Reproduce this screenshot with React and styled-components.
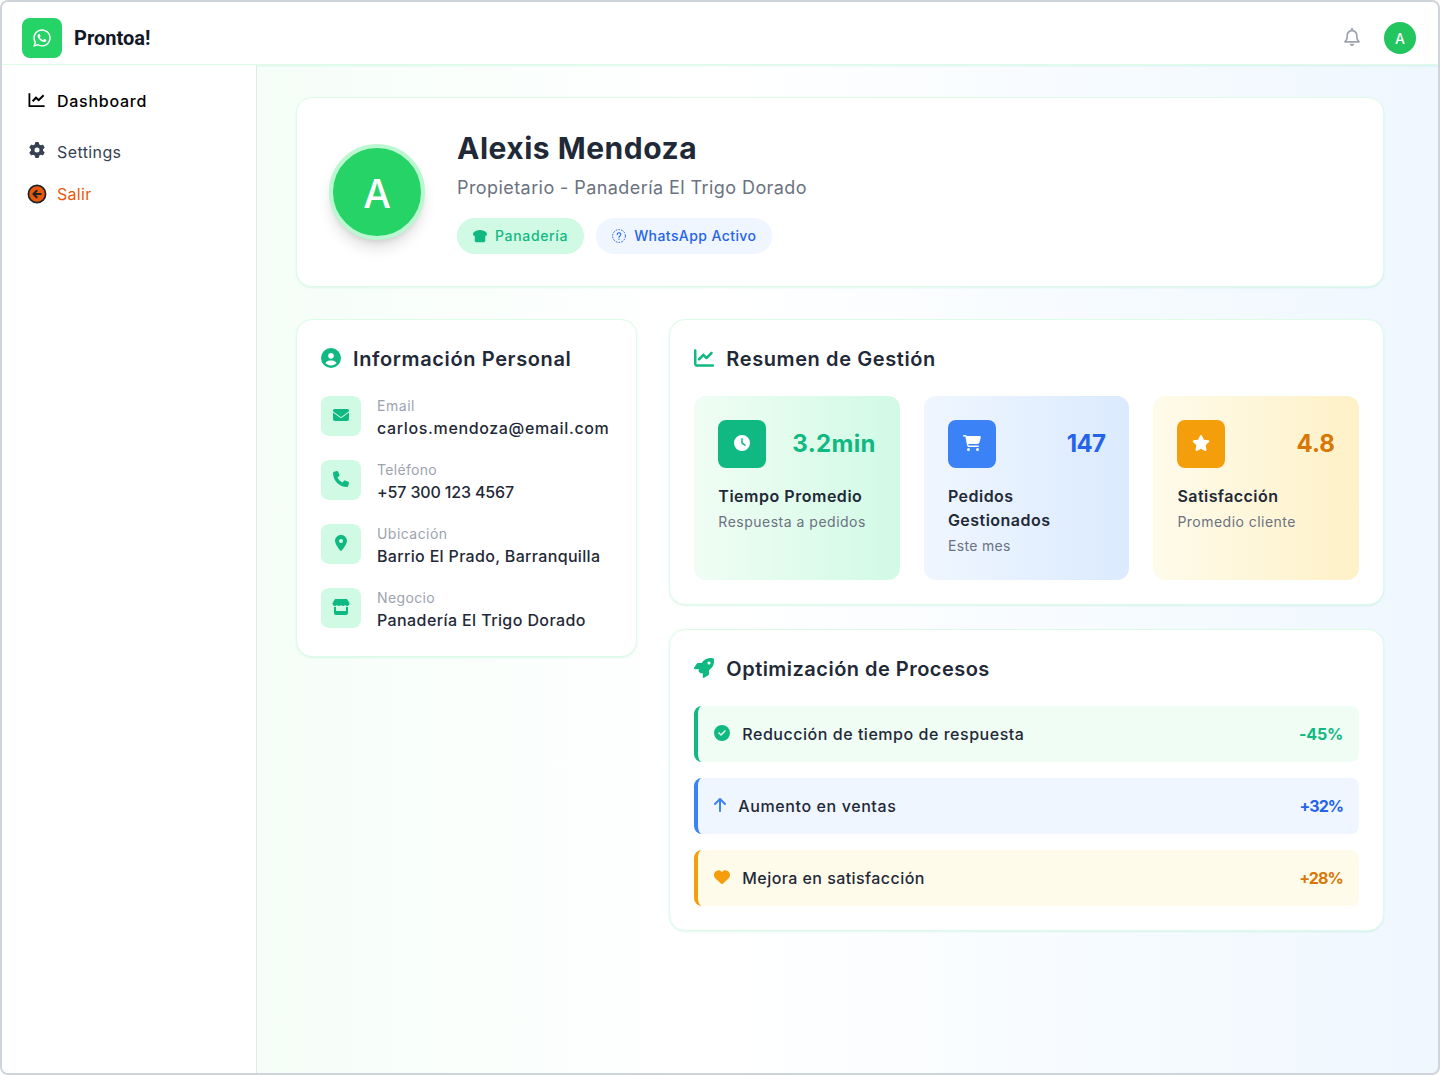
import React from "react";
import styled, { createGlobalStyle } from "styled-components";
import {
  FaArrowUp,
  FaBreadSlice,
  FaCartShopping,
  FaChartLine,
  FaCircleCheck,
  FaCircleUser,
  FaClock,
  FaEnvelope,
  FaGear,
  FaHeart,
  FaLocationDot,
  FaPhone,
  FaRegBell,
  FaRocket,
  FaStar,
  FaStore,
  FaWhatsapp,
} from "react-icons/fa6";

const GlobalStyle = createGlobalStyle`
  *, *::before, *::after { box-sizing: border-box; }
  body {
    margin: 0;
    font-family: Inter, "Open Sans", sans-serif;
    color: #1f2937;
    background: #fff;
  }
  h1, h2, h3, p { margin: 0; }
`;

const tones = {
  green: { soft: "#f0fdf4", deep: "#d1fae5", solid: "#10b981", text: "#10b981" },
  blue: { soft: "#eff6ff", deep: "#dbeafe", solid: "#3b82f6", text: "#2563eb" },
  amber: { soft: "#fffbeb", deep: "#fef1c7", solid: "#f59e0b", text: "#d97706" },
};

const Shell = styled.div`
  display: flex;
  flex-direction: column;
  height: 1075px;
  overflow: hidden;
  border: 2px solid #ced4da;
  border-radius: 8px;
  background: linear-gradient(90deg, #f0fdf4, #ffffff 50%, #eff7ff);
`;

const Header = styled.header`
  display: flex;
  flex: none;
  align-items: flex-start;
  justify-content: space-between;
  height: 63px;
  padding: 16px 22px 0 20px;
  background: #fff;
  border-bottom: 1px solid #dcfce7;
  box-shadow: 0 1px 2px rgba(16, 185, 129, 0.12);
`;

const Brand = styled.div`
  display: flex;
  align-items: center;
  gap: 12px;
  height: 40px;
`;

const Logo = styled.div`
  display: grid;
  place-items: center;
  width: 40px;
  height: 40px;
  border-radius: 8px;
  background: #25d366;
  color: #fff;
  font-size: 20px;
`;

const BrandName = styled.span`
  font-family: Roboto, sans-serif;
  font-size: 20px;
  font-weight: 700;
  line-height: 28px;
  color: #111827;
`;

const HeaderActions = styled.div`
  display: flex;
  align-items: center;
  gap: 24px;
  height: 40px;
`;

const BellButton = styled.span`
  display: flex;
  padding-bottom: 2px;
  color: #9ca3af;
  svg { width: 16px; height: 18px; }
`;

const UserDot = styled.span`
  display: grid;
  place-items: center;
  width: 32px;
  height: 32px;
  border-radius: 50%;
  background: #22c55e;
  color: #fff;
  font-size: 14px;
  font-weight: 500;
`;

const Body = styled.div`
  display: flex;
  flex: 1;
  min-height: 0;
`;

const Sidebar = styled.nav`
  display: flex;
  flex: none;
  flex-direction: column;
  width: 255px;
  padding: 24px 0 0 25px;
  background: #fff;
  border-right: 1px solid #e5e7eb;
`;

const NavItem = styled.div`
  display: flex;
  align-items: center;
  gap: 10px;
  margin-bottom: ${(p) => p.$after || 0}px;
  color: ${(p) => p.$color};
  font-size: 16px;
  font-weight: ${(p) => p.$weight || 400};
  line-height: 24px;
  letter-spacing: ${(p) => p.$track}px;
`;

const NavIcon = styled.span`
  display: flex;
  align-items: center;
  justify-content: center;
  width: 20px;
  height: 24px;
  padding-right: ${(p) => p.$shift || 0}px;
  padding-bottom: ${(p) => p.$lift || 0}px;
`;

const Main = styled.main`
  display: flex;
  flex: 1;
  flex-direction: column;
  gap: 32px;
  padding: 32px 54px 0 39px;
`;

const Card = styled.section`
  padding: ${(p) => p.$pad || 24}px;
  background: #fff;
  border: 1px solid #dcfce7;
  border-radius: 16px;
  box-shadow: 0 1px 2px rgba(16, 185, 129, 0.12);
`;

const ProfileCard = styled(Card)`
  display: flex;
  align-items: center;
  gap: 32px;
`;

const Avatar = styled.div`
  display: grid;
  place-items: center;
  width: 96px;
  height: 96px;
  padding-top: 2px;
  border: 4px solid #bbf7d0;
  border-radius: 50%;
  background: #25d366;
  box-shadow: 0 10px 15px -3px rgba(0, 0, 0, 0.14), 0 4px 6px -4px rgba(0, 0, 0, 0.14);
  color: #fff;
  font-size: 39px;
  font-weight: 500;
  line-height: 1;
`;

const ProfileName = styled.h1`
  margin-bottom: 8px;
  font-size: 30px;
  font-weight: 700;
  line-height: 36px;
  letter-spacing: 0.5px;
`;

const ProfileRole = styled.p`
  margin-bottom: 16px;
  color: #6b7280;
  font-size: 18px;
  line-height: 28px;
  letter-spacing: 0.425px;
`;

const Badges = styled.div`
  display: flex;
  gap: 12px;
`;

const Badge = styled.span`
  display: flex;
  align-items: center;
  gap: 8px;
  padding: 8px 16px;
  border-radius: 18px;
  background: ${(p) => p.$bg};
  color: ${(p) => p.$color};
  font-size: 14px;
  font-weight: 500;
  line-height: 20px;
  letter-spacing: ${(p) => p.$track}px;
  svg { width: 14px; height: 14px; }
`;

const Columns = styled.div`
  display: grid;
  grid-template-columns: repeat(3, minmax(0, 1fr));
  align-items: start;
  gap: 32px;
`;

const WideColumn = styled.div`
  display: flex;
  flex-direction: column;
  grid-column: span 2;
  gap: 24px;
`;

const CardTitle = styled.h2`
  display: flex;
  align-items: center;
  gap: 12px;
  margin-bottom: 23px;
  padding-top: 1px;
  font-size: 20px;
  font-weight: 600;
  line-height: 28px;
  letter-spacing: ${(p) => p.$track}px;
  svg {
    width: 20px;
    height: 20px;
    margin-bottom: 3px;
    color: #10b981;
  }
`;

const InfoList = styled.div`
  display: grid;
  gap: 20px;
`;

const InfoRow = styled.div`
  display: flex;
  gap: 16px;
`;

const InfoIcon = styled.span`
  display: grid;
  flex: none;
  place-items: center;
  width: 40px;
  height: 40px;
  padding-bottom: 2px;
  border-radius: 8px;
  background: #d1fae5;
  color: #10b981;
  svg { width: ${(p) => p.$glyph}px; height: 16px; }
`;

const InfoLabel = styled.p`
  color: #9ca3af;
  font-size: 14px;
  line-height: 20px;
  letter-spacing: ${(p) => p.$track}px;
`;

const InfoValue = styled.p`
  font-size: 16px;
  font-weight: 500;
  line-height: 24px;
  letter-spacing: ${(p) => p.$track}px;
  white-space: nowrap;
`;

const Stats = styled.div`
  display: grid;
  grid-template-columns: repeat(3, minmax(0, 1fr));
  gap: 24px;
`;

const StatCard = styled.article`
  padding: 24px;
  border-radius: 12px;
  background: linear-gradient(90deg, ${(p) => p.$tone.soft}, ${(p) => p.$tone.deep});
`;

const StatHead = styled.div`
  display: flex;
  align-items: center;
  justify-content: space-between;
  margin-bottom: 16px;
`;

const StatIcon = styled.span`
  display: grid;
  place-items: center;
  width: 48px;
  height: 48px;
  padding-bottom: 2px;
  border-radius: 8px;
  background: ${(p) => p.$tone.solid};
  color: #fff;
  svg { width: ${(p) => p.$glyph}px; height: 16px; }
`;

const StatValue = styled.span`
  color: ${(p) => p.$tone.text};
  font-size: 24px;
  font-weight: 700;
  line-height: 32px;
  letter-spacing: ${(p) => p.$track}px;
`;

const StatTitle = styled.h3`
  font-size: 16px;
  font-weight: 600;
  line-height: 24px;
  letter-spacing: ${(p) => p.$track}px;
`;

const StatNote = styled.p`
  margin-top: 4px;
  color: #6b7280;
  font-size: 14px;
  line-height: 20px;
  letter-spacing: ${(p) => p.$track}px;
`;

const Improvements = styled.div`
  display: grid;
  gap: 16px;
`;

const Improvement = styled.div`
  display: flex;
  align-items: center;
  gap: 12px;
  height: 56px;
  padding: 0 16px;
  border-left: 4px solid ${(p) => p.$tone.solid};
  border-radius: 8px;
  background: ${(p) => p.$tone.soft};
  svg {
    width: ${(p) => p.$glyph}px;
    height: 16px;
    margin-bottom: 2px;
    color: ${(p) => p.$tone.solid};
  }
`;

const ImprovementName = styled.span`
  flex: 1;
  font-size: 16px;
  font-weight: 500;
  line-height: 24px;
  letter-spacing: ${(p) => p.$track}px;
`;

const ImprovementValue = styled.span`
  color: ${(p) => p.$tone.text};
  font-size: 16px;
  font-weight: 700;
  letter-spacing: ${(p) => p.$track}px;
`;

const DashboardIcon = () => (
  <svg width="17" height="15" viewBox="0 0 17 15" fill="none" stroke="currentColor">
    <path d="M1.4 0.3V13.2H16.6" strokeWidth="1.8" />
    <path d="M4.6 8.2 8 4.7 10.7 7.2 15.6 2.2" strokeWidth="2" />
  </svg>
);

const ExitIcon = () => (
  <svg width="20" height="20" viewBox="0 0 20 20" fill="none" stroke="#1f2225">
    <circle cx="10" cy="10" r="8.6" fill="#ea580c" strokeWidth="1.7" />
    <path
      d="M13.7 10H6.6M9.7 6.7 6.4 10l3.3 3.3"
      strokeWidth="2"
      strokeLinecap="round"
      strokeLinejoin="round"
    />
  </svg>
);

const DashedHelpIcon = () => (
  <svg viewBox="0 0 14 14" fill="none" stroke="currentColor">
    <circle cx="7" cy="7" r="6.4" strokeWidth="1" strokeDasharray="1.7 1.17" />
    <path
      d="M5.2 5.5a1.8 1.7 0 1 1 2.7 1.4C7.2 7.3 7 7.6 7 8.2"
      strokeWidth="1.1"
      strokeLinecap="round"
    />
    <circle cx="7" cy="10.1" r="0.35" strokeWidth="0.6" fill="currentColor" />
  </svg>
);

const contact = [
  { icon: FaEnvelope, glyph: 16, label: "Email", lt: 0.53, value: "carlos.mendoza@email.com", vt: 0.64 },
  { icon: FaPhone, glyph: 16, label: "Teléfono", lt: 0.31, value: "+57 300 123 4567", vt: -0.15 },
  { icon: FaLocationDot, glyph: 12, label: "Ubicación", lt: 0.45, value: "Barrio El Prado, Barranquilla", vt: 0.33 },
  { icon: FaStore, glyph: 18, label: "Negocio", lt: 0.36, value: "Panadería El Trigo Dorado", vt: 0.4 },
];

const stats = [
  { icon: FaClock, glyph: 16, tone: tones.green, value: "3.2min", vt: 0.34, title: "Tiempo Promedio", tt: 0.52, note: "Respuesta a pedidos", nt: 0.5 },
  { icon: FaCartShopping, glyph: 18, tone: tones.blue, value: "147", vt: -0.6, title: "Pedidos Gestionados", tt: 0.48, note: "Este mes", nt: 0.35 },
  { icon: FaStar, glyph: 18, tone: tones.amber, value: "4.8", vt: 0.04, title: "Satisfacción", tt: 0.44, note: "Promedio cliente", nt: 0.47 },
];

const improvements = [
  { icon: FaCircleCheck, glyph: 16, tone: tones.green, name: "Reducción de tiempo de respuesta", nt: 0.53, value: "-45%", vt: -0.2 },
  { icon: FaArrowUp, glyph: 12, tone: tones.blue, name: "Aumento en ventas", nt: 0.6, value: "+32%", vt: -1 },
  { icon: FaHeart, glyph: 16, tone: tones.amber, name: "Mejora en satisfacción", nt: 0.435, value: "+28%", vt: -0.85 },
];

export default function App() {
  return (
    <Shell>
      <GlobalStyle />
      <Header>
        <Brand>
          <Logo><FaWhatsapp /></Logo>
          <BrandName>Prontoa!</BrandName>
        </Brand>
        <HeaderActions>
          <BellButton><FaRegBell /></BellButton>
          <UserDot>A</UserDot>
        </HeaderActions>
      </Header>
      <Body>
        <Sidebar>
          <NavItem $color="#000" $weight={500} $track={0.73} $after={27}>
            <NavIcon $lift={2} $shift={2}><DashboardIcon /></NavIcon>
            Dashboard
          </NavItem>
          <NavItem $color="#374151" $track={0.4} $after={18}>
            <NavIcon $lift={4} $shift={1}><FaGear /></NavIcon>
            Settings
          </NavItem>
          <NavItem $color="#ea580c" $track={0.29}>
            <NavIcon><ExitIcon /></NavIcon>
            Salir
          </NavItem>
        </Sidebar>
        <Main>
          <ProfileCard $pad={32}>
            <Avatar>A</Avatar>
            <div>
              <ProfileName>Alexis Mendoza</ProfileName>
              <ProfileRole>Propietario - Panadería El Trigo Dorado</ProfileRole>
              <Badges>
                <Badge $bg="#d1fae5" $color="#10b981" $track={0.66}>
                  <FaBreadSlice />
                  Panadería
                </Badge>
                <Badge $bg="#eff6ff" $color="#2563eb" $track={0.42}>
                  <DashedHelpIcon />
                  WhatsApp Activo
                </Badge>
              </Badges>
            </div>
          </ProfileCard>
          <Columns>
            <Card>
              <CardTitle $track={0.63}><FaCircleUser />Información Personal</CardTitle>
              <InfoList>
                {contact.map(({ icon: Icon, glyph, label, lt, value, vt }) => (
                  <InfoRow key={label}>
                    <InfoIcon $glyph={glyph}><Icon /></InfoIcon>
                    <div>
                      <InfoLabel $track={lt}>{label}</InfoLabel>
                      <InfoValue $track={vt}>{value}</InfoValue>
                    </div>
                  </InfoRow>
                ))}
              </InfoList>
            </Card>
            <WideColumn>
              <Card>
                <CardTitle $track={0.6}><FaChartLine />Resumen de Gestión</CardTitle>
                <Stats>
                  {stats.map(({ icon: Icon, glyph, tone, value, vt, title, tt, note, nt }) => (
                    <StatCard key={title} $tone={tone}>
                      <StatHead>
                        <StatIcon $tone={tone} $glyph={glyph}><Icon /></StatIcon>
                        <StatValue $tone={tone} $track={vt}>{value}</StatValue>
                      </StatHead>
                      <StatTitle $track={tt}>{title}</StatTitle>
                      <StatNote $track={nt}>{note}</StatNote>
                    </StatCard>
                  ))}
                </Stats>
              </Card>
              <Card>
                <CardTitle $track={0.475}><FaRocket />Optimización de Procesos</CardTitle>
                <Improvements>
                  {improvements.map(({ icon: Icon, glyph, tone, name, nt, value, vt }) => (
                    <Improvement key={name} $tone={tone} $glyph={glyph}>
                      <Icon />
                      <ImprovementName $track={nt}>{name}</ImprovementName>
                      <ImprovementValue $tone={tone} $track={vt}>{value}</ImprovementValue>
                    </Improvement>
                  ))}
                </Improvements>
              </Card>
            </WideColumn>
          </Columns>
        </Main>
      </Body>
    </Shell>
  );
}
